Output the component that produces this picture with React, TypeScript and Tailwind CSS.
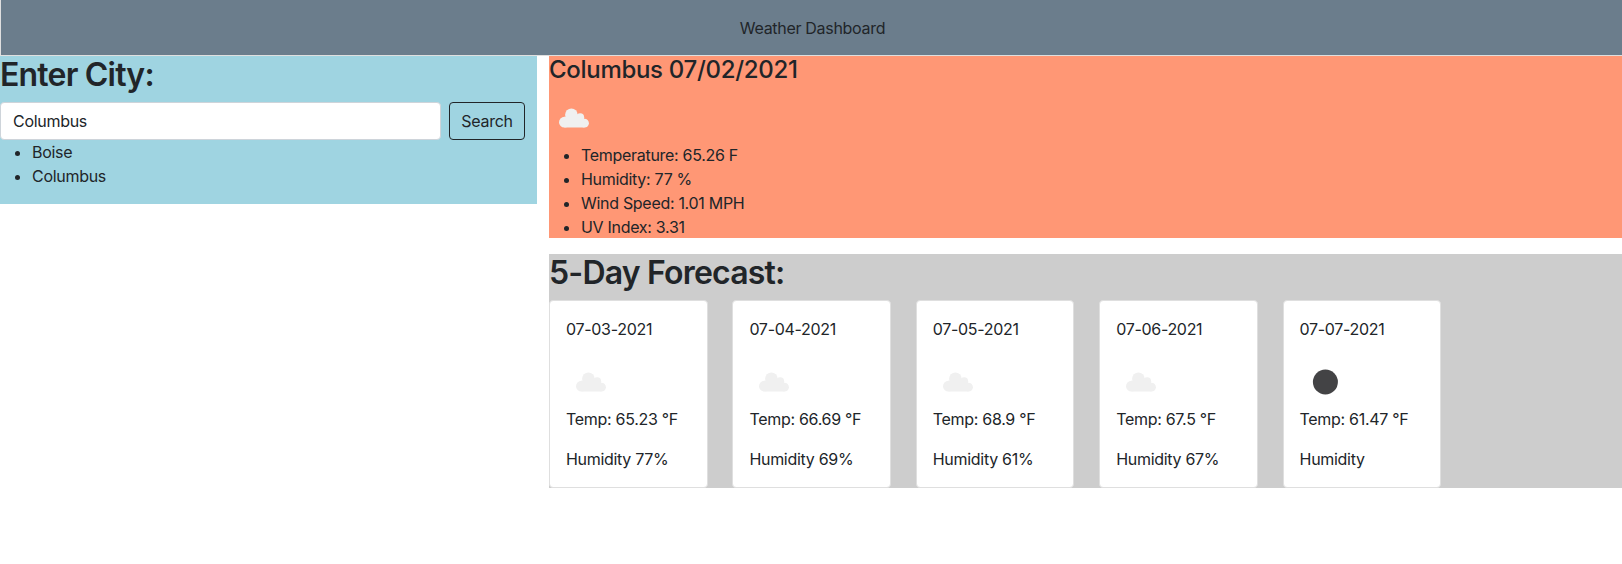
const history = ["Boise", "Columbus"];

const conditions = [
  { text: "Temperature: 65.26 F", tracking: "tracking-[-0.3px]" },
  { text: "Humidity: 77 %", tracking: "tracking-[-0.3px]" },
  { text: "Wind Speed: 1.01 MPH", tracking: "tracking-[-0.3px]" },
  { text: "UV Index: 3.31", tracking: "tracking-[-0.3px]" },
];

const forecast = [
  { date: "07-03-2021", icon: "cloud", temp: "65.23", humidity: "77%" },
  { date: "07-04-2021", icon: "cloud", temp: "66.69", humidity: "69%" },
  { date: "07-05-2021", icon: "cloud", temp: "68.9", humidity: "61%" },
  { date: "07-06-2021", icon: "cloud", temp: "67.5", humidity: "67%" },
  { date: "07-07-2021", icon: "clear", temp: "61.47", humidity: "" },
];

function WeatherIcon({ kind }: { kind: string }) {
  return (
    <svg className="block size-[50px]" viewBox="0 0 50 50">
      {kind === "cloud" ? (
        <g fill="#f0f0f0">
          <circle cx="22.4" cy="21.8" r="6.3" />
          <circle cx="31.2" cy="24.2" r="3.9" />
          <circle cx="15.4" cy="29.2" r="5.4" />
          <circle cx="35.5" cy="30.2" r="4.4" />
          <path d="M15.4 23.8H35.1V28L35.5 34.6H15.4Z" />
        </g>
      ) : (
        <circle cx="25.4" cy="25" r="12.5" fill="#434345" />
      )}
    </svg>
  );
}

export default function App() {
  return (
    <div className="h-[564px] overflow-hidden bg-white font-['Inter','Liberation_Sans',sans-serif] text-base leading-6 tracking-[-0.3px] text-[#212529]">
      <header className="flex h-14 items-center justify-center border-b border-l border-[#dfdfdf] bg-[#6b7d8c] pl-0.5">
        Weather Dashboard
      </header>
      <main className="flex items-start gap-3">
        <section className="w-[537px] bg-[#9fd4e1] pb-4">
          <h2 className="mb-2 text-[32px] leading-[38.4px] font-semibold tracking-[-0.8px]">Enter City:</h2>
          <form className="flex gap-2 pr-3">
            <input
              className="h-[38px] w-[441px] rounded border border-[#ced4da] bg-white px-3 outline-none"
              defaultValue="Columbus"
            />
            <button type="button" className="h-[38px] w-[76px] rounded border border-[#212529]">
              Search
            </button>
          </form>
          <ul className="list-disc pl-8">
            {history.map((city) => (
              <li key={city}>{city}</li>
            ))}
          </ul>
        </section>
        <div className="flex-1">
          <section className="mb-4 h-[182px] bg-[#ff9775]">
            <h4 className="mb-2 text-2xl leading-[28.8px] font-medium">Columbus 07/02/2021</h4>
            <WeatherIcon kind="cloud" />
            <ul className="list-disc pl-8">
              {conditions.map((c) => (
                <li key={c.text} className={c.tracking}>
                  {c.text}
                </li>
              ))}
            </ul>
          </section>
          <section className="bg-[#cdcdcd]">
            <h2 className="mb-2 text-[32px] leading-[38.4px] font-semibold tracking-[-0.8px]">5-Day Forecast:</h2>
            <div className="flex gap-[24.8px]">
              {forecast.map((day) => (
                <article key={day.date} className="w-[158.6px] rounded border border-[#dfdfdf] bg-white p-4">
                  <p className="mb-4">{day.date}</p>
                  <WeatherIcon kind={day.icon} />
                  <p className="mb-4">Temp: {day.temp} °F</p>
                  <p>Humidity {day.humidity}</p>
                </article>
              ))}
            </div>
          </section>
        </div>
      </main>
    </div>
  );
}
